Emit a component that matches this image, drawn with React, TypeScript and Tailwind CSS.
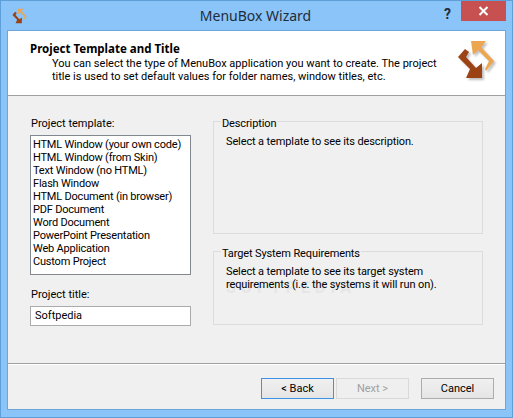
const items = [
  "HTML Window (your own code)",
  "HTML Window (from Skin)",
  "Text Window (no HTML)",
  "Flash Window",
  "HTML Document (in browser)",
  "PDF Document",
  "Word Document",
  "PowerPoint Presentation",
  "Web Application",
  "Custom Project",
];

const lightArrow = "M18 5H33L28 11L41 25L33 35L32 33L36 25L25 14L20 19Z";
const darkArrow = "M12 13L5 21L17 33L13 42H29V27L23 32L13 21L16 16Z";

function ArrowsIcon({ width, height, viewBox, shadow = true }: { width: number; height: number; viewBox: string; shadow?: boolean }) {
  return (
    <svg width={width} height={height} viewBox={viewBox}>
      {shadow && (
        <g fill="#000" opacity="0.25" transform="translate(2 2)" style={{ filter: "blur(1px)" }}>
          <path d={lightArrow} />
          <path d={darkArrow} />
        </g>
      )}
      <path d={lightArrow} fill="#eca650" />
      <path d={darkArrow} fill="#9c4316" />
    </svg>
  );
}

function Group({ title, className, children }: { title: string; className: string; children: React.ReactNode }) {
  return (
    <div className={`relative border border-[#dcdcdc] pl-[7px] ${className}`}>
      <span className="absolute -top-[5px] left-[7px] bg-[#f0f0f0] px-px leading-[13px] tracking-[-0.12px]">{title}</span>
      {children}
    </div>
  );
}

export default function App() {
  return (
    <div
      className="flex h-[418px] w-[513px] flex-col whitespace-nowrap border border-[#5f9fd8] bg-[#8bc4f8] text-[11px] leading-[13px] text-black"
      style={{ fontFamily: 'Roboto, sans-serif' }}
    >
      {/* title bar */}
      <div className="flex h-[29px] shrink-0">
        <div className="w-[72px] pl-[11px] pt-[7px]">
          <ArrowsIcon width={15} height={16} viewBox="4 4 38 39" shadow={false} />
        </div>
        <div
          className="flex-1 pt-[5px] text-center text-[14px] leading-[20px] text-[#1e2c3a]"
          style={{ fontFamily: '"Noto Sans", sans-serif' }}
        >
          MenuBox Wizard
        </div>
        <div className="flex w-[74px] justify-end">
          <div className="pr-[10px] pt-[3px] text-[14px] font-bold leading-[20px] text-[#1e2c3a]">?</div>
          <div className="mr-[6px] flex h-[20px] w-[45px] items-center justify-center bg-[#c75050]">
            <svg width="11" height="10" viewBox="0 0 11 10">
              <path d="M1.5 1L9.5 9M9.5 1L1.5 9" stroke="#fff" strokeWidth="2" />
            </svg>
          </div>
        </div>
      </div>

      {/* client */}
      <div className="mx-[6px] flex flex-1 flex-col border border-[#6fa6da] bg-[#f0f0f0]">
        <div className="flex h-[65px] shrink-0 border-b border-[#a0a0a0] bg-white">
          <div className="flex-1 pl-[22px] pt-[11px]">
            <div
              className="text-[11.5px] font-bold"
              style={{ fontFamily: '"Noto Sans", sans-serif' }}
            >
              Project Template and Title
            </div>
            <div className="mt-[2px] pl-[22px]">
              You can select the type of MenuBox application you want to create. The project
              <br />
              title is used to set default values for folder names, window titles, etc.
            </div>
          </div>
          <div className="w-[52px] pt-[5px]">
            <ArrowsIcon width={48} height={50} viewBox="0 0 48 50" />
          </div>
        </div>

        <div className="flex flex-1 pl-[22px] pt-[21px]">
          <div className="w-[161px]">
            <div className="pl-px">Project template:</div>
            <div className="mt-[5px] h-[140px] border border-[#828790] bg-white pl-[2px] pt-[2px] tracking-[-0.2px]">
              {items.map((item) => (
                <div key={item}>{item}</div>
              ))}
            </div>
            <div className="mt-[13px] pl-px">Project title:</div>
            <div className="mt-[5px] h-[20px] border border-[#ababab] bg-white pl-[4px] pt-[2px]">Softpedia</div>
          </div>
          <div className="ml-[22px] w-[270px] pt-[4px] tracking-[-0.12px]">
            <Group title="Description" className="h-[113px] pt-[13px]">
              <div className="pl-[5px]">Select a template to see its description.</div>
            </Group>
            <Group title="Target System Requirements" className="mt-[17px] h-[74px] pt-[13px]">
              <span className="absolute left-[12px] top-[27px] text-[16px] font-bold leading-[18px] tracking-[5px] text-[#e6e6e6]">
                SOFTPEDIA
              </span>
              <div className="relative pl-[5px]">
                Select a template to see its target system
                <br />
                requirements (i.e. the systems it will run on).
              </div>
            </Group>
          </div>
        </div>

        <div className="flex h-[46px] shrink-0 items-start border-t border-[#a0a0a0] pr-[11px] pt-[14px] shadow-[inset_0_1px_0_#fff]">
          <div className="flex-1" />
          <button className="h-[21px] w-[73px] border border-[#3c94e8] bg-gradient-to-b from-[#f0f0f0] to-[#e5e5e5]">&lt; Back</button>
          <button className="ml-[2px] h-[21px] w-[73px] border border-[#d9d9d9] bg-[#efefef] text-[#a0a0a0]">Next &gt;</button>
          <button className="ml-[12px] h-[21px] w-[73px] border border-[#acacac] bg-gradient-to-b from-[#f0f0f0] to-[#e5e5e5]">Cancel</button>
        </div>
      </div>
      <div className="h-[7px] shrink-0" />
    </div>
  );
}
